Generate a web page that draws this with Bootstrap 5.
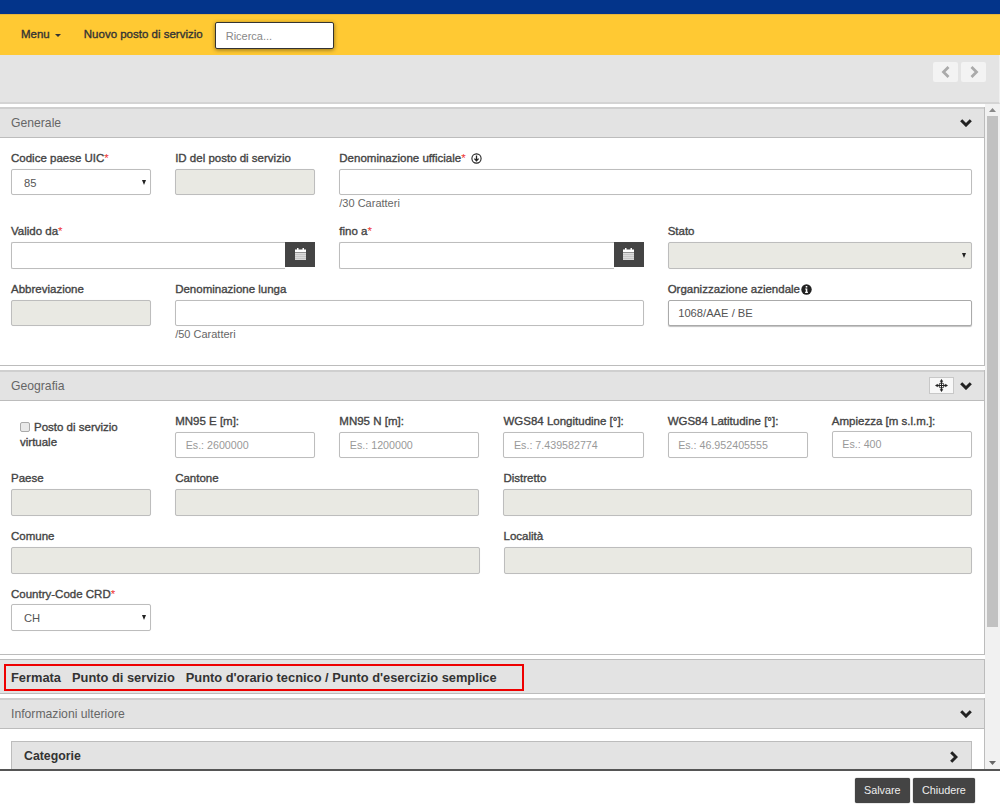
<!DOCTYPE html>
<html lang="it">
<head>
<meta charset="utf-8">
<title>Nuovo posto di servizio</title>
<link href="https://cdn.jsdelivr.net/npm/bootstrap@5.3.0/dist/css/bootstrap.min.css" rel="stylesheet">
<style>
html,body{height:100%;overflow:hidden}
body{font-family:"Liberation Sans",Arial,sans-serif;font-size:12px;color:#333;background:#fff}
.shell{height:809px}
.bluebar{height:14px;background:#03348a;flex:none}
.yellowbar{height:41px;background:#ffc933;flex:none;padding-left:21px;border-top:1px solid #e9b53a}
.yellowbar a{font-size:11.5px;color:#333;text-decoration:none;-webkit-text-stroke:.35px #333}
.navcaret{display:inline-block;border-top:3.5px solid #333;border-left:3px solid transparent;border-right:3px solid transparent;margin-left:5px;vertical-align:middle}
.navgap{margin-left:23px}
.searchbox{width:119px;height:27px;margin-left:12.5px;border:1px solid #333;border-radius:2px;box-shadow:0 1px 4px rgba(0,0,0,.45);font-size:11px;padding:0 9.5px;background:#fff;outline:0;margin-top:1px}
.searchbox::placeholder{color:#888}
.toolbar{height:49px;background:#e4e4e4;flex:none;border-bottom:2px solid #d4d4d4;padding:7px 13px 0 0;border-right:1px solid #f0f0f0}
.navbtn{width:25px;height:20px;background:#f3f3f3;border-radius:2px;margin-left:3px}
.scrollzone{min-height:0;flex:1 1 0;overflow:hidden;padding-top:2.7px}
.scrollinner{min-width:0;flex:1 1 0}
.fakebar{width:15px;flex:none;background:#f1f1f1;margin-top:-2.7px;padding:0 2px 0 1.5px}
.bararrow{height:12px}
.barthumb{height:511px;background:#c1c1c1}
.pane{border:1px solid #bcbcbc;border-left:0;margin-bottom:4px;width:985px}
.panehead{height:31px;background:#e3e3e3;border-top:2px solid #cfcfcf;margin-top:-1px;border-bottom:1px solid #bcbcbc;padding:0 12px 0 11px;font-size:12.2px;color:#666}
.panebody{padding:13px 0 10px}
.frow{margin-left:-1px;margin-right:0;--bs-gutter-x:24px}
.fld{margin-bottom:13px}
.flabel{display:block;height:18px;line-height:14px;font-size:11.5px;color:#444;margin:0;white-space:nowrap;-webkit-text-stroke:.35px #444}
.flabel.tight{height:17px}
.flabel.tighter{height:17.3px}
.req{color:#e33;-webkit-text-stroke:0}
.ctl{display:block;width:100%;height:26.7px;border:1px solid #bdbdbd;border-radius:2px;background:#fff;font-size:11.2px;color:#555;padding:0 9.5px;outline:0;box-shadow:0 0 1px rgba(0,0,0,.08)}
.ctl::placeholder{color:#999;font-size:10.7px}
.ctl:disabled,.ctl.off{background:#e9e9e3}
.ctl.strong{border-color:#aaa;box-shadow:0 1px 1px rgba(0,0,0,.25)}
.selbox{position:relative}
.selbox::after{content:"";position:absolute;right:5.5px;top:11px;border-top:5px solid #222;border-left:2.6px solid transparent;border-right:2.6px solid transparent}
.sel{appearance:none;-webkit-appearance:none;padding:2px 0 0 12px}
.helptext{height:15.5px;line-height:17px;font-size:11px;color:#666;white-space:nowrap}
.dategrp{display:flex}
.dategrp .ctl{border-right:0;border-radius:2px 0 0 2px;flex:1 1 0;min-width:0}
.calbtn{width:30px;height:25px;background:#444;flex:none;display:flex;align-items:center;justify-content:center}
.chk{font-size:11.5px;color:#444;padding:6px 0 0 9px;line-height:15px;-webkit-text-stroke:.35px #444}
.tick{display:inline-block;width:10px;height:10px;border:1px solid #aaa;border-radius:2px;background:#e9e9e9;vertical-align:-1px;margin-right:4px}
.mapbtn{width:25px;height:17px;background:#f8f8f8;border:1px solid #c8c8c8;margin-right:6px}
.tabbar{height:35.5px;background:#e3e3e3;padding:4.6px 0 0 4px}
.tabframe{display:inline-flex;align-items:center;height:27px;width:520px;border:2px solid #e00;padding-left:5px;gap:11px;font-weight:bold;font-size:12.85px;color:#333;white-space:nowrap}
.infobody{padding:12px 12px 0 11px;height:41px;overflow:hidden}
.catpanel{height:60px;background:#e3e3e3;border:1px solid #bcbcbc;padding:0 13px 0 12px;font-weight:bold;font-size:12.3px;color:#333}
.catrow{height:29px}
.footerbar{height:40px;flex:none;border-top:2px solid #555;padding:7px 25px 0 0;gap:3px;background:#fff}
.darkbtn{height:25px;border:0;background:#444;color:#eee;border-radius:2px;font-size:10.8px;padding:0 9.2px;box-shadow:0 0 1px #222}
.greyglyph{display:block;margin:auto}
.icongap{margin-left:2px}
.iconpull{margin-left:-2px}
</style>
</head>
<body>
<div class="shell d-flex flex-column">
  <div class="bluebar"></div>
  <div class="yellowbar d-flex align-items-center">
    <a href="#">Menu<span class="navcaret"></span></a>
    <a href="#" class="navgap">Nuovo posto di servizio</a>
    <input class="searchbox" type="text" placeholder="Ricerca...">
  </div>
  <div class="toolbar d-flex justify-content-end align-items-start">
    <div class="navbtn d-flex"><svg class="greyglyph" width="10" height="12" viewBox="0 0 10 12"><path d="M7.5 1 L2.5 6 L7.5 11" fill="none" stroke="#aaa" stroke-width="2.8"/></svg></div>
    <div class="navbtn d-flex"><svg class="greyglyph" width="10" height="12" viewBox="0 0 10 12"><path d="M2.5 1 L7.5 6 L2.5 11" fill="none" stroke="#aaa" stroke-width="2.8"/></svg></div>
  </div>
  <div class="scrollzone d-flex">
    <div class="scrollinner">
      <section class="pane">
        <div class="panehead d-flex align-items-center justify-content-between"><span>Generale</span>
          <svg width="12" height="8" viewBox="0 0 12 8"><path d="M1.2 1.2 L6 6 L10.8 1.2" fill="none" stroke="#222" stroke-width="3"/></svg></div>
        <div class="panebody">
          <div class="row frow">
            <div class="col-2 fld"><label class="flabel">Codice paese UIC<span class="req">*</span></label><div class="selbox"><select class="ctl sel"><option>85</option></select></div></div>
            <div class="col-2 fld"><label class="flabel">ID del posto di servizio</label><input class="ctl" disabled></div>
            <div class="col-8 fld"><label class="flabel">Denominazione ufficiale<span class="req">*</span> <svg width="11" height="11" viewBox="0 0 11 11" class="icongap"><circle cx="5.5" cy="5.5" r="4.6" fill="none" stroke="#222" stroke-width="1.1"/><path d="M5.5 2.4V7.6M3.4 5.6 5.5 7.8 7.6 5.6" fill="none" stroke="#222" stroke-width="1.3"/></svg></label><input class="ctl"><div class="helptext">/30 Caratteri</div></div>
          </div>
          <div class="row frow">
            <div class="col-4 fld"><label class="flabel">Valido da<span class="req">*</span></label><div class="dategrp"><input class="ctl"><div class="calbtn"><svg width="11" height="12" viewBox="0 0 11 12"><path d="M0 4.5h11V12H0z" fill="#ddd"/><path d="M0 6.6h11M0 8.6h11M0 10.6h11" stroke="#aaa" stroke-width=".5"/><path d="M0 1.5h11V4H0zM2 0h1.5v2H2zM7.5 0H9v2H7.5z" fill="#fff"/></svg></div></div></div>
            <div class="col-4 fld"><label class="flabel">fino a<span class="req">*</span></label><div class="dategrp"><input class="ctl"><div class="calbtn"><svg width="11" height="12" viewBox="0 0 11 12"><path d="M0 4.5h11V12H0z" fill="#ddd"/><path d="M0 6.6h11M0 8.6h11M0 10.6h11" stroke="#aaa" stroke-width=".5"/><path d="M0 1.5h11V4H0zM2 0h1.5v2H2zM7.5 0H9v2H7.5z" fill="#fff"/></svg></div></div></div>
            <div class="col-4 fld"><label class="flabel">Stato</label><div class="selbox"><select class="ctl sel off" disabled></select></div></div>
          </div>
          <div class="row frow">
            <div class="col-2 fld"><label class="flabel">Abbreviazione</label><input class="ctl" disabled></div>
            <div class="col-6 fld"><label class="flabel">Denominazione lunga</label><input class="ctl"><div class="helptext">/50 Caratteri</div></div>
            <div class="col-4 fld"><label class="flabel">Organizzazione aziendale <svg width="11" height="11" viewBox="0 0 11 11" class="iconpull"><circle cx="5.5" cy="5.5" r="5.2" fill="#222"/><path d="M4.7 1.9h1.6v1.5H4.7zM4.2 4.4h2.1v3.4h.6v1.1H4.1V7.8h.7V5.5h-.6z" fill="#fff"/></svg></label><input class="ctl strong" value="1068/AAE / BE"></div>
          </div>
        </div>
      </section>
      <section class="pane">
        <div class="panehead d-flex align-items-center"><span class="me-auto">Geografia</span>
          <div class="mapbtn d-flex"><svg class="greyglyph" width="13" height="13" viewBox="0 0 13 13"><path d="M6.5 0 8.3 2.8H4.7zM6.5 13 4.7 10.2H8.3zM0 6.5 2.8 4.7V8.3zM13 6.5 10.2 8.3V4.7z" fill="#222"/><path d="M6.5 2v9M2 6.5h9" stroke="#222" stroke-width="1"/><circle cx="6.5" cy="6.5" r="2.6" fill="none" stroke="#333" stroke-width="1"/></svg></div>
          <svg width="12" height="8" viewBox="0 0 12 8"><path d="M1.2 1.2 L6 6 L10.8 1.2" fill="none" stroke="#222" stroke-width="3"/></svg></div>
        <div class="panebody">
          <div class="row frow">
            <div class="col-2 fld"><div class="chk"><span class="tick"></span>Posto di servizio virtuale</div></div>
            <div class="col-2 fld"><label class="flabel">MN95 E [m]:</label><input class="ctl" placeholder="Es.: 2600000"></div>
            <div class="col-2 fld"><label class="flabel">MN95 N [m]:</label><input class="ctl" placeholder="Es.: 1200000"></div>
            <div class="col-2 fld"><label class="flabel">WGS84 Longitudine [°]:</label><input class="ctl" placeholder="Es.: 7.439582774"></div>
            <div class="col-2 fld"><label class="flabel">WGS84 Latitudine [°]:</label><input class="ctl" placeholder="Es.: 46.952405555"></div>
            <div class="col-2 fld"><label class="flabel tighter">Ampiezza [m s.l.m.]:</label><input class="ctl" placeholder="Es.: 400"></div>
          </div>
          <div class="row frow">
            <div class="col-2 fld"><label class="flabel">Paese</label><input class="ctl" disabled></div>
            <div class="col-4 fld"><label class="flabel">Cantone</label><input class="ctl" disabled></div>
            <div class="col-6 fld"><label class="flabel">Distretto</label><input class="ctl" disabled></div>
          </div>
          <div class="row frow">
            <div class="col-6 fld"><label class="flabel">Comune</label><input class="ctl" disabled></div>
            <div class="col-6 fld"><label class="flabel">Località</label><input class="ctl" disabled></div>
          </div>
          <div class="row frow">
            <div class="col-2 fld"><label class="flabel tight">Country-Code CRD<span class="req">*</span></label><div class="selbox"><select class="ctl sel"><option>CH</option></select></div></div>
          </div>
        </div>
      </section>
      <section class="pane tabbar"><div class="tabframe"><span>Fermata</span><span>Punto di servizio</span><span>Punto d'orario tecnico / Punto d'esercizio semplice</span></div></section>
      <section class="pane">
        <div class="panehead d-flex align-items-center justify-content-between"><span>Informazioni ulteriore</span>
          <svg width="12" height="8" viewBox="0 0 12 8"><path d="M1.2 1.2 L6 6 L10.8 1.2" fill="none" stroke="#222" stroke-width="3"/></svg></div>
        <div class="infobody"><div class="catpanel"><div class="catrow d-flex align-items-center justify-content-between"><span>Categorie</span><svg width="8" height="12" viewBox="0 0 8 12"><path d="M1.2 1.2 L6 6 L1.2 10.8" fill="none" stroke="#222" stroke-width="3"/></svg></div></div></div>
      </section>
    </div>
    <div class="fakebar d-flex flex-column">
      <div class="bararrow d-flex"><svg class="greyglyph" width="7" height="4" viewBox="0 0 7 4"><path d="M3.5 0 7 4H0z" fill="#888"/></svg></div>
      <div class="barthumb"></div>
      <div class="bararrow d-flex mt-auto"><svg class="greyglyph" width="7" height="4" viewBox="0 0 7 4"><path d="M3.5 4 7 0H0z" fill="#666"/></svg></div>
    </div>
  </div>
  <div class="footerbar d-flex justify-content-end align-items-start">
    <button class="darkbtn" type="button">Salvare</button>
    <button class="darkbtn" type="button">Chiudere</button>
  </div>
</div>
<script src="https://cdn.jsdelivr.net/npm/bootstrap@5.3.0/dist/js/bootstrap.bundle.min.js"></script>
</body>
</html>
